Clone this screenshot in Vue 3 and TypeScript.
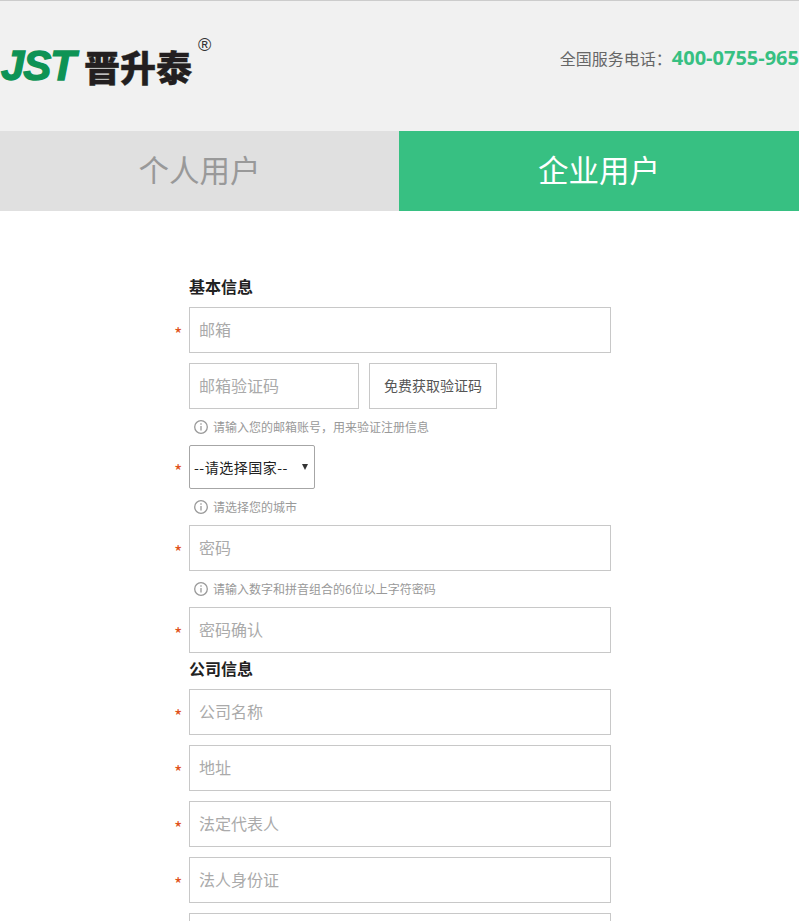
<script setup lang="ts">
import { ref } from 'vue'

const activeTab = ref('company')

const companyFields = ['公司名称', '地址', '法定代表人', '法人身份证', '联系人']
</script>

<template>
  <div class="page">
    <header class="header">
      <div class="logo">
        <span class="logo-en">JST</span>
        <span class="logo-cn">晋升泰</span>
        <span class="logo-reg">®</span>
      </div>
      <div class="phone">全国服务电话：<b>400-0755-965</b></div>
    </header>

    <nav class="tabs">
      <div class="tab" :class="{ active: activeTab === 'person' }" @click="activeTab = 'person'">个人用户</div>
      <div class="tab" :class="{ active: activeTab === 'company' }" @click="activeTab = 'company'">企业用户</div>
    </nav>

    <form class="form" @submit.prevent>
      <h3 class="title">基本信息</h3>
      <div class="row req">
        <input class="field" placeholder="邮箱" />
      </div>
      <div class="row code-row">
        <input class="field code" placeholder="邮箱验证码" />
        <button class="code-btn" type="button">免费获取验证码</button>
      </div>
      <p class="hint">
        <svg viewBox="0 0 14 14" width="14" height="14"><circle cx="7" cy="7" r="6.3" /><path d="M7 6v4.4M7 3.2v1.6" /></svg>
        <span>请输入您的邮箱账号，用来验证注册信息</span>
      </p>
      <div class="row req select-row">
        <select class="country">
          <option>--请选择国家--</option>
        </select>
      </div>
      <p class="hint">
        <svg viewBox="0 0 14 14" width="14" height="14"><circle cx="7" cy="7" r="6.3" /><path d="M7 6v4.4M7 3.2v1.6" /></svg>
        <span>请选择您的城市</span>
      </p>
      <div class="row req">
        <input class="field" type="text" placeholder="密码" />
      </div>
      <p class="hint">
        <svg viewBox="0 0 14 14" width="14" height="14"><circle cx="7" cy="7" r="6.3" /><path d="M7 6v4.4M7 3.2v1.6" /></svg>
        <span>请输入数字和拼音组合的6位以上字符密码</span>
      </p>
      <div class="row req">
        <input class="field" type="text" placeholder="密码确认" />
      </div>
      <h3 class="title second">公司信息</h3>
      <div v-for="name in companyFields" :key="name" class="row req gap">
        <input class="field" :placeholder="name" />
      </div>
    </form>
  </div>
</template>

<style>
html, body {
  margin: 0;
  overflow: hidden;
  background: #fff;
}
</style>

<style scoped>
.page {
  width: 799px;
  height: 921px;
  overflow: hidden;
  font-family: "Noto Sans CJK SC", "Liberation Sans", sans-serif;
  background: #fff;
}

.header {
  box-sizing: border-box;
  height: 131px;
  border-top: 1px solid #ccc;
  background: #f1f1f1;
  display: flex;
  align-items: center;
  justify-content: space-between;
}

.logo {
  position: relative;
  display: flex;
  align-items: center;
  height: 40px;
}

.logo-en {
  box-sizing: border-box;
  width: 84px;
  padding-left: 1px;
  font: italic 700 42px/40px "Liberation Sans", sans-serif;
  color: #0e9355;
  letter-spacing: -1px;
  -webkit-text-stroke: 1.4px #0e9355;
}

.logo-cn {
  font-size: 36px;
  line-height: 40px;
  font-weight: 900;
  color: #231f20;
  -webkit-text-stroke: 0.4px #231f20;
}

.logo-reg {
  position: absolute;
  left: 198px;
  top: -11px;
  font: 18px/20px "Liberation Sans", sans-serif;
  color: #333;
}

.phone {
  margin-bottom: 18px;
  font-size: 16px;
  color: #666;
  white-space: nowrap;
}

.phone b {
  font: 700 20px "Open Sans", "Liberation Sans", sans-serif;
  color: #37c082;
}

.tabs {
  display: flex;
  height: 80px;
}

.tab {
  box-sizing: border-box;
  width: 399px;
  height: 80px;
  padding-bottom: 4px;
  background: #e0e0e0;
  color: #999;
  font-size: 30.5px;
  line-height: 76px;
  text-align: center;
}

.tab + .tab {
  flex: 1;
}

.tab.active {
  background: #37c082;
  color: #fff;
}

.form {
  width: 422px;
  margin: 64px 0 0 189px;
}

.title {
  margin: 0 0 10px;
  font-size: 16px;
  line-height: 22px;
  font-weight: 700;
  color: #222;
}

.title.second {
  margin: 4px 0 10px;
}

.row {
  position: relative;
}

.gap {
  margin-bottom: 10px;
}

.req::before {
  content: "*";
  position: absolute;
  left: -15px;
  top: 50%;
  margin-top: -9px;
  font-size: 18px;
  line-height: 24px;
  color: #e0521a;
}

.field {
  display: block;
  box-sizing: border-box;
  width: 100%;
  height: 46px;
  padding: 0 9px 2px;
  border: 1px solid #c8c8c8;
  border-radius: 0;
  outline: none;
  font-family: inherit;
  font-size: 16px;
  color: #333;
}

.field::placeholder {
  color: #aaa;
}

.code-row {
  display: flex;
  gap: 10px;
  margin-top: 10px;
}

.code {
  width: 170px;
}

.code-btn {
  width: 128px;
  height: 46px;
  padding: 0 0 2px;
  border: 1px solid #c8c8c8;
  background: #fff;
  font-family: inherit;
  font-size: 14px;
  color: #555;
}

.hint {
  display: flex;
  align-items: center;
  gap: 5px;
  height: 36px;
  margin: 0;
  padding-left: 5px;
  font-size: 12px;
  color: #999;
}

.hint span {
  margin-bottom: 2px;
}

.hint svg {
  fill: none;
  stroke: #999;
  stroke-width: 1.3;
}

.select-row::after {
  content: "";
  position: absolute;
  left: 113px;
  top: 19px;
  border-style: solid;
  border-width: 6px 3.5px 0;
  border-color: #333 transparent transparent;
  pointer-events: none;
}

.country {
  box-sizing: border-box;
  display: block;
  width: 126px;
  height: 44px;
  padding: 0 0 0 4px;
  border: 1px solid #a6a6a6;
  border-radius: 2px;
  background: #fff;
  appearance: none;
  font-family: inherit;
  font-size: 14px;
  letter-spacing: 0.5px;
  color: #222;
}
</style>
